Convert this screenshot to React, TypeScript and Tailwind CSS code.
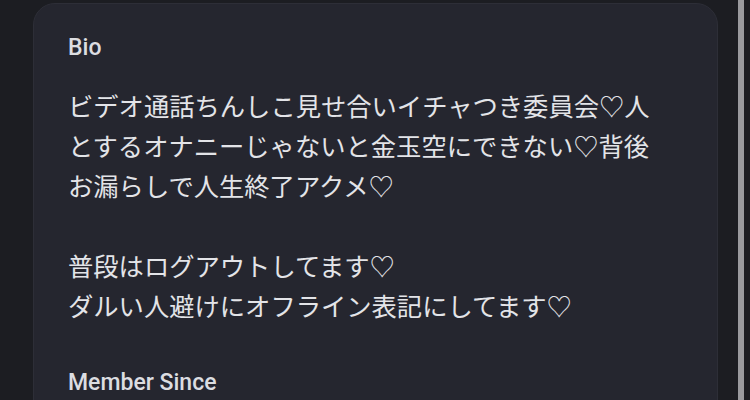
export default function App() {
  const lines1 = [
    "ビデオ通話ちんしこ見せ合いイチャつき委員会♡人",
    "とするオナニーじゃないと金玉空にできない♡背後",
    "お漏らしで人生終了アクメ♡",
  ];
  const lines2 = ["普段はログアウトしてます♡", "ダルい人避けにオフライン表記にしてます♡"];
  return (
    <div className="w-[750px] h-[400px] bg-[#1c1d22] overflow-hidden grid grid-cols-[33px_685px_20px_6px_6px]">
      <div />
      <div className="pt-[3px]">
        <div className="h-[420px] rounded-t-[22px] bg-[#25262f] border border-[#2d2e37] pl-[34px] pt-[29px]">
          <div
            className="text-[23px] leading-[30px] font-medium text-[#dcdde1]"
            style={{ fontFamily: "Roboto, 'Noto Sans', sans-serif" }}
          >
            Bio
          </div>
          <div
            className="mt-[22px] text-[25.3px] leading-[40px] text-[#e3e4e8] whitespace-nowrap"
            style={{ fontFamily: "'Noto Sans CJK JP', sans-serif" }}
          >
            {lines1.map((l) => (
              <div key={l}>{l}</div>
            ))}
            <div className="h-[40px]" />
            {lines2.map((l) => (
              <div key={l}>{l}</div>
            ))}
          </div>
          <div
            className="mt-[43px] text-[23px] leading-[30px] font-medium text-[#dcdde1]"
            style={{ fontFamily: "Roboto, 'Noto Sans', sans-serif" }}
          >
            Member Since
          </div>
        </div>
      </div>
      <div />
      <div className="h-[400px] bg-[#9a9a9e]" />
      <div />
    </div>
  );
}
